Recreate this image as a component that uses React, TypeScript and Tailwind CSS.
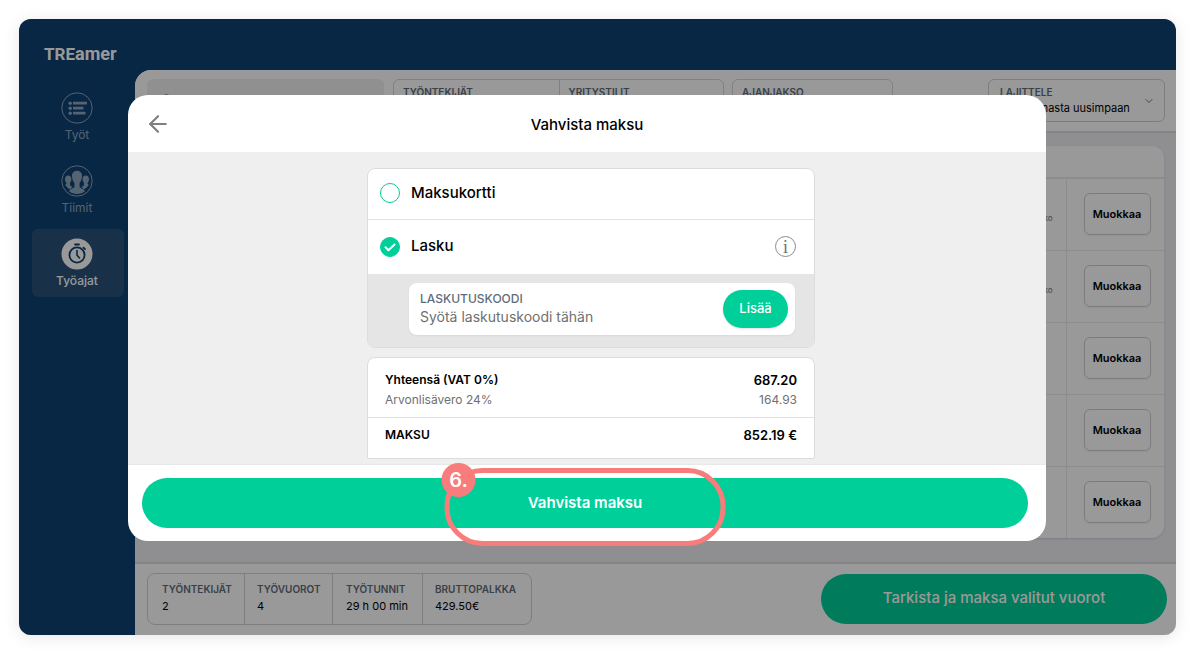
import { useState } from 'react';
import type { ReactNode } from 'react';
import { ArrowLeft, ChevronDown, Search } from 'lucide-react';

function ListIcon() {
  return (
    <svg viewBox="0 0 32 32" className="size-8" fill="none">
      <circle cx="16" cy="16" r="15.2" stroke="currentColor" />
      <g fill="currentColor">
        <circle cx="9.2" cy="11.2" r="1.7" />
        <circle cx="9.2" cy="16.2" r="1.7" />
        <circle cx="9.2" cy="21.2" r="1.7" />
        <rect x="12" y="9.8" width="14" height="2.8" rx="0.6" />
        <rect x="12" y="14.8" width="10.5" height="2.8" rx="0.6" />
        <rect x="12" y="19.8" width="12.5" height="2.8" rx="0.6" />
      </g>
    </svg>
  );
}

function TeamIcon() {
  return (
    <svg viewBox="0 0 32 32" className="size-8" fill="none">
      <circle cx="16" cy="16" r="15.2" stroke="currentColor" />
      <g fill="currentColor">
        <path d="M7.2 10.6c2 0 3.3 1.4 3.2 3.6-.1 1.8-.8 3-1.4 3.7v2.3c.2.9 2 1.2 2.8 1.8-1 .6-2 1.3-2.400 2.600C6.800 23.500 5 21.500 4.200 19.600c.8-.3 1.300-.7 1.300-1.700-.8-.8-1.500-2-1.500-3.700 0-2.200 1.300-3.600 3.200-3.600z" />
        <path d="M24.800 10.600c-2 0-3.300 1.400-3.200 3.600.1 1.800.8 3 1.400 3.700v2.300c-.2.900-2 1.200-2.800 1.800 1 .6 2 1.300 2.400 2.600 2.600-1.100 4.400-3.100 5.200-5-.8-.3-1.300-.7-1.300-1.700.8-.8 1.500-2 1.500-3.700 0-2.200-1.300-3.600-3.200-3.600z" />
        <path d="M16 5.800c3.200 0 5.200 2.200 5 5.600-.1 3-1.200 5-2.400 6.300v4.400c.4 1.600 4.800 1.600 5.200 4.200-2 1.700-4.700 2.700-7.800 2.700s-5.800-1-7.800-2.700c.4-2.600 4.800-2.600 5.200-4.200v-4.400c-1.200-1.300-2.300-3.300-2.400-6.300-.2-3.400 1.800-5.600 5-5.600z" />
      </g>
    </svg>
  );
}

function TimerIcon() {
  return (
    <svg viewBox="0 0 32 32" className="size-8" fill="none">
      <circle cx="16" cy="16" r="15.5" fill="currentColor" />
      <g stroke="#0d4173" strokeLinecap="round">
        <circle cx="16" cy="17" r="7.6" strokeWidth="1.8" />
        <path d="M14 6.500h4M22.500 9.600l1.500 1.500" strokeWidth="1.8" />
        <path d="M16 12.500v4.700l2.500 2.800" strokeWidth="1.6" />
      </g>
    </svg>
  );
}

interface NavItemProps {
  icon: ReactNode;
  label: string;
  active?: boolean;
}

function NavItem({ icon, label, active }: NavItemProps) {
  return (
    <a
      href="#"
      className={`flex h-[68px] flex-col items-center gap-px rounded-md pt-[9px] pr-[2px] text-xs ${
        active ? 'bg-[#28527b] font-medium text-white' : 'text-[#8fa6bd]'
      }`}
    >
      {icon}
      <span className="leading-5">{label}</span>
    </a>
  );
}

function FilterCell({ label, className = '' }: { label: string; className?: string }) {
  return (
    <button type="button" className={`flex h-full items-start px-[9px] pt-1 text-left ${className}`}>
      <span className="text-[10px] leading-4 font-semibold text-[#5f6c78]">{label}</span>
    </button>
  );
}

function Toolbar() {
  return (
    <div className="flex h-[63px] items-start border-b-2 border-[#dcdde2] bg-white pt-[9px] pr-[11px] pl-3">
      <label className="flex h-[42px] w-[237px] items-center gap-2 rounded-md bg-[#f1f1f1] px-[13px]">
        <Search className="mt-[14px] size-[14px] self-start text-gray-500" />
        <input type="search" aria-label="Haku" className="min-w-0 flex-1 outline-none" />
      </label>
      <div className="ml-[9px] grid h-[42px] w-[331px] grid-cols-2 rounded-md border border-[#d4d7da]">
        <FilterCell label="TYÖNTEKIJÄT" />
        <FilterCell label="YRITYSTILIT" className="border-l border-[#d4d7da]" />
      </div>
      <div className="ml-2 h-[42px] w-[161px] rounded-md border border-[#d4d7da]">
        <FilterCell label="AJANJAKSO" />
      </div>
      <div className="relative ml-auto flex h-[43px] w-[177px] flex-col rounded-md border border-[#cdd0d3] pt-1 pl-[11px]">
        <label htmlFor="sort" className="text-[10px] leading-4 font-semibold text-[#5f6c78]">
          LAJITTELE
        </label>
        <select id="sort" className="w-full appearance-none bg-transparent text-[11px] leading-4 text-black outline-none">
          <option>Vanhimmasta uusimpaan</option>
        </select>
        <ChevronDown className="pointer-events-none absolute top-[15px] right-[9px] size-3 text-gray-500" />
      </div>
    </div>
  );
}

const shifts = [
  { id: 1, note: 'ko' },
  { id: 2, note: 'ko' },
  { id: 3, note: '' },
  { id: 4, note: '' },
  { id: 5, note: '' },
];

function ShiftTable() {
  return (
    <div className="flex-1 bg-[#eeeff4] px-3 pt-[13px]">
      <div className="overflow-hidden rounded-xl bg-white shadow-sm">
        <table className="w-full border-collapse">
          <thead>
            <tr className="h-8 border-b-2 border-[#e9e9ec]">
              <th />
              <th className="w-[98px]" />
            </tr>
          </thead>
          <tbody>
            {shifts.map((shift) => (
              <tr key={shift.id} className="h-[72px] border-b border-[#e9e9ec] last:border-0">
                <td className="pt-2 pr-[13px] text-right text-[8px] text-gray-500">{shift.note}</td>
                <td className="border-l border-[#e9e9ec] pl-[17px]">
                  <button
                    type="button"
                    className="block h-[42px] w-[67px] rounded-md border border-[#d0d0d4] text-[11px] font-semibold text-black shadow-xs"
                  >
                    Muokkaa
                  </button>
                </td>
              </tr>
            ))}
          </tbody>
        </table>
      </div>
    </div>
  );
}

const totals = [
  { label: 'TYÖNTEKIJÄT', value: '2', cell: 'w-[96px] pl-[14px]' },
  { label: 'TYÖVUOROT', value: '4', cell: 'w-[88px] border-l pl-3' },
  { label: 'TYÖTUNNIT', value: '29 h 00 min', cell: 'w-[90px] border-l pl-[13px]' },
  { label: 'BRUTTOPALKKA', value: '429.50€', cell: 'w-[109px] border-l pl-3' },
];

function BottomBar() {
  return (
    <div className="flex h-[73px] items-center justify-between border-t-2 border-[#dcdde2] bg-white pr-[9px] pb-[2px] pl-3">
      <dl className="flex h-[52px] rounded-lg border border-[#d0d3d6]">
        {totals.map((t) => (
          <div key={t.label} className={`border-[#d0d3d6] pt-[7px] ${t.cell}`}>
            <dt className="text-[10px] leading-4 font-semibold text-[#5f6c78]">{t.label}</dt>
            <dd className="text-[11px] leading-[18px] text-black">{t.value}</dd>
          </div>
        ))}
      </dl>
      <button
        type="button"
        className="h-[50px] w-[346px] rounded-full bg-[#00cf9a] text-[15px] font-medium text-white"
      >
        Tarkista ja maksa valitut vuorot
      </button>
    </div>
  );
}

interface PaymentOptionProps {
  label: string;
  value: string;
  selected: string;
  onSelect: (value: string) => void;
}

function PaymentOption({ label, value, selected, onSelect }: PaymentOptionProps) {
  return (
    <label className="flex items-center gap-[11px] text-[15px] font-medium text-black">
      <span className="relative flex size-5">
        <input
          type="radio"
          name="payment"
          value={value}
          checked={selected === value}
          onChange={() => onSelect(value)}
          className="size-5 appearance-none rounded-full border border-[#00cf9a] checked:bg-[#00cf9a]"
        />
        {selected === value && (
          <svg viewBox="0 0 20 20" className="pointer-events-none absolute inset-0 size-5" fill="none">
            <path d="M5.500 10.300l3 2.900 6-5.700" stroke="white" strokeWidth="2" strokeLinecap="round" strokeLinejoin="round" />
          </svg>
        )}
      </span>
      {label}
    </label>
  );
}

function PaymentModal() {
  const [method, setMethod] = useState('invoice');

  return (
    <div role="dialog" aria-label="Vahvista maksu" className="rounded-[20px] bg-white">
      {/* Header */}
      <div className="grid h-[57px] grid-cols-[1fr_auto_1fr] items-center px-5">
        <button type="button" aria-label="Takaisin" className="justify-self-start text-[#808080]">
          <ArrowLeft className="size-5" strokeWidth={2} viewBox="3 3 18 18" />
        </button>
        <h2 className="pt-1 text-[15px] font-medium text-black">Vahvista maksu</h2>
      </div>

      {/* Body */}
      <div className="border-b border-[#e8e8e8] bg-[#efefef] pt-4 pb-[5px] pl-2">
        <div className="mx-auto flex w-[448px] max-w-full flex-col gap-[9px]">
          <div className="overflow-hidden rounded-lg border border-[#dcdcdc] bg-white">
            <div className="flex h-[51px] items-center border-b border-[#e2e2e2] px-3 pb-[2px]">
              <PaymentOption label="Maksukortti" value="card" selected={method} onSelect={setMethod} />
            </div>
            <div className="flex h-[54px] items-center justify-between pr-[18px] pb-px pl-3">
              <PaymentOption label="Lasku" value="invoice" selected={method} onSelect={setMethod} />
              <button
                type="button"
                aria-label="Lisätietoja"
                className="flex size-[21px] items-center justify-center rounded-full border border-[#8a8a8a] font-['Liberation_Serif',serif] text-[18px] leading-none text-[#707070]"
              >
                i
              </button>
            </div>
            <div className="bg-[#e5e5e5] pt-[9px] pr-[19px] pb-3 pl-[41px]">
              <div className="flex h-[52px] items-center rounded-lg bg-white pr-[7px] pl-[11px] shadow-xs">
                <div className="flex min-w-0 flex-1 flex-col">
                  <label htmlFor="code" className="text-[12px] leading-4 font-medium text-[#5f6c78]">
                    LASKUTUSKOODI
                  </label>
                  <input
                    id="code"
                    placeholder="Syötä laskutuskoodi tähän"
                    className="h-5 text-[14px] leading-5 outline-none placeholder:text-[#707070]"
                  />
                </div>
                <button
                  type="button"
                  className="h-[38px] w-[65px] rounded-full bg-[#00cf9a] text-[13px] font-medium text-white shadow-sm"
                >
                  Lisää
                </button>
              </div>
            </div>
          </div>

          <dl className="rounded-t-lg rounded-b-xs border border-[#dcdcdc] bg-white text-[12px] leading-5 text-black">
            <div className="border-b border-[#e2e2e2] px-[17px] pt-3 pb-[7px]">
              <div className="flex justify-between font-semibold">
                <dt>Yhteensä (VAT 0%)</dt>
                <dd className="text-[13px]">687.20</dd>
              </div>
              <div className="flex justify-between text-[#6f6f6f]">
                <dt>Arvonlisävero 24%</dt>
                <dd>164.93</dd>
              </div>
            </div>
            <div className="flex h-10 justify-between px-[17px] pt-[7px] font-semibold">
              <dt>MAKSU</dt>
              <dd className="text-[13px]">852.19 €</dd>
            </div>
          </dl>
        </div>
      </div>

      {/* Footer */}
      <div className="pt-[13px] pr-[18px] pb-[13px] pl-[14px]">
        <div className="relative">
          <button
            type="button"
            className="h-[50px] w-full rounded-full bg-[#00cf9a] text-[15px] font-semibold text-white"
          >
            Vahvista maksu
          </button>
          <div className="pointer-events-none absolute -top-[10px] left-1/2 h-[78px] w-[281px] -translate-x-1/2 rounded-[38px] border-[5px] border-[#f87c7c]">
            <span className="absolute -top-[10px] -left-2 flex size-[34px] items-center justify-center rounded-full bg-[#f87c7c] text-[20px] font-semibold text-white">
              6.
            </span>
          </div>
        </div>
      </div>
    </div>
  );
}

export default function App() {
  return (
    <div className="flex min-h-screen flex-col bg-white pt-[19px] pr-6 pb-[23px] pl-[19px] font-['Inter',sans-serif]">
      <div className="relative flex flex-1 flex-col overflow-hidden rounded-xl bg-[#0d4173] shadow-[0_2px_16px_rgba(0,0,0,0.1)]">
        <header className="flex h-[51px] items-end px-[25px]">
          <a href="#" className="font-['Roboto',sans-serif] text-[17px] leading-8 font-bold text-white">
            TRE<span className="text-[18px]">amer</span>
          </a>
        </header>

        <div className="flex flex-1">
          <nav className="flex w-[116px] flex-col gap-[5px] pt-[13px] pr-[11px] pl-[13px]">
            <NavItem icon={<ListIcon />} label="Työt" />
            <NavItem icon={<TeamIcon />} label="Tiimit" />
            <NavItem icon={<TimerIcon />} label="Työajat" active />
          </nav>
          <main className="flex min-w-0 flex-1 flex-col overflow-hidden rounded-tl-2xl bg-white">
            <Toolbar />
            <ShiftTable />
            <BottomBar />
          </main>
        </div>

        {/* Backdrop */}
        <div className="absolute inset-0 bg-black/40 pt-[76px] pr-[130px] pl-[109px]">
          <PaymentModal />
        </div>
      </div>
    </div>
  );
}
